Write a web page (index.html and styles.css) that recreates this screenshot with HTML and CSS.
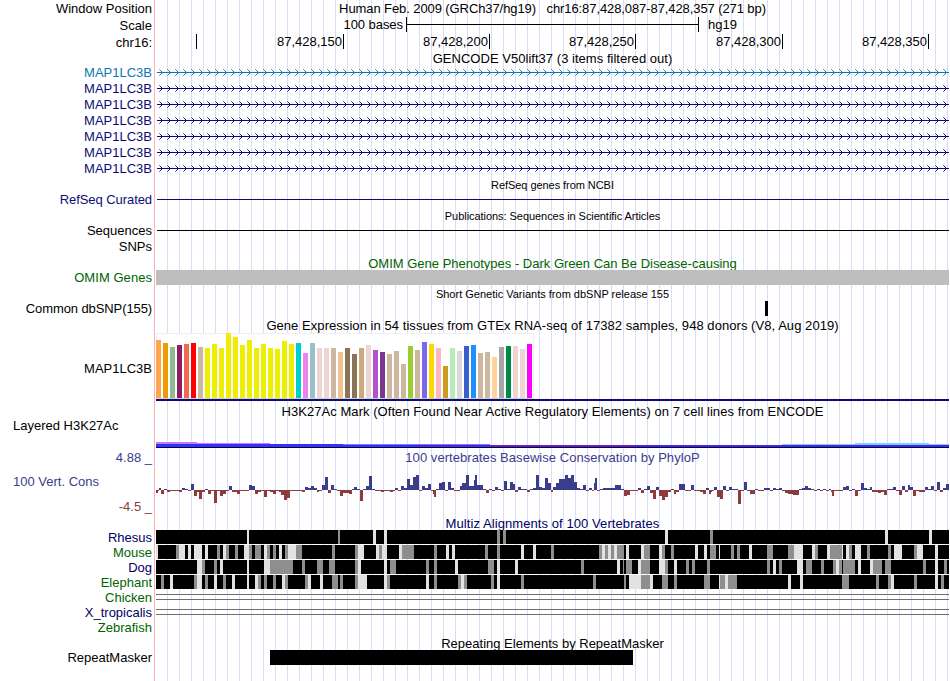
FILE: index.html
```html
<!DOCTYPE html>
<html lang="en">
<head>
    <meta charset="UTF-8">
    <title>Human chr16:87,428,087-87,428,357</title>
    <link rel="stylesheet" href="styles.css">
</head>
<body>
    <div class="browser">
        <div class="row h17">
            <div class="label">Window Position</div>
            <div class="title position">Human Feb. 2009 (GRCh37/hg19) &nbsp; chr16:87,428,087-87,428,357 (271 bp)</div>
        </div>
        <div class="row h17">
            <div class="label">Scale</div>
            <div class="plot scale">
                <span class="scale-size">100 bases</span>
                <span class="scale-bar"></span>
                <span class="scale-db">hg19</span>
            </div>
        </div>
        <div class="row h17">
            <div class="label">chr16:</div>
            <div class="plot ruler">
                <span class="tick first"></span>
                <span class="tick wide">87,428,150</span>
                <span class="tick">87,428,200</span>
                <span class="tick">87,428,250</span>
                <span class="tick wide">87,428,300</span>
                <span class="tick">87,428,350</span>
            </div>
        </div>

        <div class="row h13"><div class="title t-gencode">GENCODE V50lift37 (3 items filtered out)</div></div>
        <div class="row h16 lightblue"><div class="label">MAP1LC3B</div><svg class="plot gene"></svg></div>
        <div class="row h16 navy"><div class="label">MAP1LC3B</div><svg class="plot gene"></svg></div>
        <div class="row h16 navy"><div class="label">MAP1LC3B</div><svg class="plot gene"></svg></div>
        <div class="row h16 navy"><div class="label">MAP1LC3B</div><svg class="plot gene"></svg></div>
        <div class="row h16 navy"><div class="label">MAP1LC3B</div><svg class="plot gene"></svg></div>
        <div class="row h16 navy"><div class="label">MAP1LC3B</div><svg class="plot gene"></svg></div>
        <div class="row h16 navy"><div class="label">MAP1LC3B</div><svg class="plot gene"></svg></div>

        <div class="row h16"><div class="title small t-refseq">RefSeq genes from NCBI</div></div>
        <div class="row h16 navy"><div class="label raised t-curated">RefSeq Curated</div><div class="plot line"></div></div>

        <div class="row h15"><div class="title small t-pubs">Publications: Sequences in Scientific Articles</div></div>
        <div class="row h16"><div class="label raised">Sequences</div><div class="plot line"></div></div>
        <div class="row h16"><div class="label raised">SNPs</div></div>

        <div class="row h15 green"><div class="title t-omim">OMIM Gene Phenotypes - Dark Green Can Be Disease-causing</div></div>
        <div class="row h15 green"><div class="label t-genes">OMIM Genes</div><div class="plot omim"></div></div>

        <div class="row h16"><div class="title small t-dbsnp">Short Genetic Variants from dbSNP release 155</div></div>
        <div class="row h15"><div class="label t-common">Common dbSNP(155)</div><div class="plot"><div class="snp"></div></div></div>

        <div class="row h17"><div class="title t-gtex">Gene Expression in 54 tissues from GTEx RNA-seq of 17382 samples, 948 donors (V8, Aug 2019)</div></div>
        <div class="row h68"><div class="label lowered">MAP1LC3B</div><svg class="plot" id="gtex"></svg></div>

        <div class="row h19"><div class="title t-h3k">H3K27Ac Mark (Often Found Near Active Regulatory Elements) on 7 cell lines from ENCODE</div></div>
        <div class="row h28"><div class="label left h3k-label">Layered H3K27Ac</div><svg class="plot" id="h3k27ac"></svg></div>

        <div class="row h18 blue">
            <div class="label">4.88 _</div>
            <div class="title t-phylop">100 vertebrates Basewise Conservation by PhyloP</div>
        </div>
        <div class="row h49">
            <div class="label cons-label">
                <span class="blue cons-name">100 Vert. Cons</span>
                <span class="brown">-4.5 _</span>
            </div>
            <svg class="plot" id="phylop"></svg>
        </div>

        <div class="row h15 darkblue"><div class="title t-multiz">Multiz Alignments of 100 Vertebrates</div></div>
        <div class="row h15 darkblue"><div class="label">Rhesus</div><svg class="plot align" data-species="rhesus"></svg></div>
        <div class="row h15 green"><div class="label">Mouse</div><svg class="plot align" data-species="mouse"></svg></div>
        <div class="row h15 darkblue"><div class="label">Dog</div><svg class="plot align" data-species="dog"></svg></div>
        <div class="row h15 green"><div class="label">Elephant</div><svg class="plot align" data-species="elephant"></svg></div>
        <div class="row h15 green"><div class="label">Chicken</div><div class="plot"><div class="gap"></div></div></div>
        <div class="row h15 darkblue"><div class="label">X_tropicalis</div><div class="plot"><div class="gap"></div></div></div>
        <div class="row h15 green"><div class="label">Zebrafish</div></div>

        <div class="row h15"><div class="title t-rmsk">Repeating Elements by RepeatMasker</div></div>
        <div class="row h15"><div class="label">RepeatMasker</div><div class="plot"><div class="repeat"></div></div></div>
    </div>
    <script src="script.js"></script>
</body>
</html>
```
FILE: styles.css
```css
body {
    margin: 0;
    background: #fff;
    color: #000;
    font-family: "Liberation Sans", Arial, sans-serif;
    font-size: 13px;
}
.browser {
    width: 949px;
    height: 681px;
    overflow: hidden;
    background-image:
        linear-gradient(#ffb4b4, #ffb4b4),
        repeating-linear-gradient(to right, transparent 0, transparent 11px, #dcdcf8 11px, #dcdcf8 12px);
    background-size: 1px 100%, 793px 100%;
    background-position: 154px 0, 156px 0;
    background-repeat: no-repeat;
}
.row {
    display: flex;
    align-items: center;
    white-space: nowrap;
}
.h13 { height: 13px; }
.h15 { height: 15px; }
.h16 { height: 16px; }
.h17 { height: 17px; }
.h18 { height: 18px; }
.h19 { height: 19px; }
.h28 { height: 28px; }
.h49 { height: 49px; }
.h68 { height: 68px; }

.label {
    flex: none;
    width: 152px;
    margin-right: 4px;
    line-height: 15px;
    text-align: right;
}
.label.left {
    width: 139px;
    padding-left: 13px;
    text-align: left;
}
.label.raised { margin-bottom: 2px; }
.label.lowered { margin-top: 2px; }
.plot {
    flex: none;
    display: block;
    width: 793px;
    height: 100%;
    shape-rendering: crispEdges;
}
.title {
    flex: none;
    width: 793px;
    line-height: 15px;
    text-align: center;
}
.title:first-child {
    margin-left: 156px;
    margin-top: 2px;
}
.small { font-size: 11px; }

.position { letter-spacing: -0.09px; }
.t-gencode { letter-spacing: 0.03px; }
.t-refseq { letter-spacing: -0.06px; }
.t-curated { letter-spacing: -0.07px; }
.t-pubs { letter-spacing: -0.05px; }
.t-genes { letter-spacing: 0.05px; }
.t-common { letter-spacing: -0.1px; }
.t-gtex { letter-spacing: 0.055px; }
.t-h3k { letter-spacing: 0.05px; }
.t-phylop { letter-spacing: 0.05px; }
.t-multiz { letter-spacing: 0.08px; }

.lightblue { color: #0c78b4; }
.navy { color: #0c0c78; }
.darkblue { color: #000064; }
.blue { color: #3c3c8c; }
.brown { color: #8c3c3c; }
.green { color: #006400; }

/* scale and ruler */
.scale, .ruler {
    display: flex;
}
.scale {
    line-height: 15px;
}
.scale-size {
    width: 247px;
    padding-right: 3px;
    letter-spacing: -0.05px;
    text-align: right;
}
.scale-bar {
    box-sizing: border-box;
    width: 293px;
    height: 15px;
    border: solid #000;
    border-width: 0 1px;
    background: linear-gradient(#000, #000) 0 7px / 100% 1px no-repeat;
}
.scale-db {
    padding-left: 9px;
}
.tick {
    box-sizing: border-box;
    width: 146px;
    height: 15px;
    border-right: 1px solid #000;
    padding-right: 1px;
    line-height: 16px;
    text-align: right;
}
.tick.wide { width: 147px; }
.tick.first { width: 41px; }

/* items */
.line {
    box-sizing: border-box;
    background: linear-gradient(currentColor, currentColor) 1px 7px / 100% 1px no-repeat;
}
.omim {
    background: #bebebe;
}
.snp {
    width: 3px;
    height: 15px;
    margin-left: 609px;
    background: #000;
}
.gap {
    height: 4px;
    margin-top: 4px;
    border: solid #6e6e6e;
    border-width: 1px 0;
}
.repeat {
    width: 363px;
    height: 15px;
    margin-left: 114px;
    background: #000;
}
.h3k-label {
    align-self: flex-start;
    margin-top: -2px;
}
.cons-label {
    display: flex;
    flex-direction: column;
    height: 100%;
}
.cons-name {
    padding: 8px 0 10px 13px;
    text-align: left;
}
```
FILE: script.js
```js
// All x values are pixels in the full image; plots start at x = 156.
const LEFT = 156;
const RIGHT = 949;
const NS = 'http://www.w3.org/2000/svg';

function rect(svg, x, y, w, h, fill, opacity) {
    const r = document.createElementNS(NS, 'rect');
    r.setAttribute('x', x - LEFT);
    r.setAttribute('y', y);
    r.setAttribute('width', w);
    r.setAttribute('height', h);
    r.setAttribute('fill', fill);
    if (opacity) r.setAttribute('opacity', opacity);
    svg.appendChild(r);
}

// introns with strand arrows
document.querySelectorAll('.gene').forEach(svg => {
    rect(svg, 157, 8, RIGHT - 157, 1, 'currentColor');
    for (let x = 162; x < RIGHT + 2; x += 8) {
        rect(svg, x - 1, 7, 1, 3, 'currentColor');
        rect(svg, x - 2, 6, 1, 1, 'currentColor', 0.9);
        rect(svg, x - 2, 10, 1, 1, 'currentColor', 0.9);
        rect(svg, x - 3, 5, 1, 1, 'currentColor', 0.55);
        rect(svg, x - 3, 11, 1, 1, 'currentColor', 0.55);
    }
});

// GTEx expression: [color, height]
const tissues = [
    ['#ffa54f', 58], ['#ee9a00', 55], ['#8fbc8f', 51], ['#8b1c62', 53], ['#ee6a50', 54], ['#ff0000', 55],
    ['#cdb79e', 51], ['#eeee00', 50], ['#eeee00', 54], ['#eeee00', 50], ['#eeee00', 65], ['#eeee00', 61],
    ['#eeee00', 53], ['#eeee00', 58], ['#eeee00', 50], ['#eeee00', 54], ['#eeee00', 50], ['#eeee00', 49],
    ['#eeee00', 57], ['#eeee00', 54], ['#00cdcd', 55], ['#ee82ee', 45], ['#9ac0cd', 55], ['#eed5d2', 50],
    ['#eed5d2', 50], ['#cdb79e', 50], ['#eec591', 46], ['#8b7355', 50], ['#8b7355', 44], ['#cdaa7d', 50],
    ['#eed5d2', 53], ['#b452cd', 48], ['#7a378b', 46], ['#cdb79e', 44], ['#cdb79e', 47], ['#cdb79e', 34],
    ['#9acd32', 52], ['#cdb79e', 48], ['#7a67ee', 56], ['#ffd700', 54], ['#ffb6c1', 50], ['#cd9b1d', 32],
    ['#b4eeb4', 50], ['#d9d9d9', 47], ['#3a5fcd', 52], ['#1e90ff', 53], ['#cdb79e', 45], ['#cdb79e', 46],
    ['#ffd39b', 41], ['#a6a6a6', 51], ['#008b45', 52], ['#eed5d2', 52], ['#eed5d2', 49], ['#ff00ff', 54]
];
const gtex = document.getElementById('gtex');
rect(gtex, 156, 0, 378, 66, '#f0f0f0');
rect(gtex, 157, 1, 376, 64, '#fff');
rect(gtex, 156, 65, 378, 1, '#d2d2d2');
tissues.forEach(([color, h], i) => rect(gtex, LEFT + i * 7, 65 - h, 5, h, color));
rect(gtex, 156, 66, 793, 2, '#0c0c78');

// layered H3K27Ac signal
const h3k = document.getElementById('h3k27ac');
rect(h3k, 156, 22, 41, 2, '#c878ff');
rect(h3k, 197, 23, 73, 1, '#c878ff');
rect(h3k, 156, 24, 260, 3, '#3232ff');
rect(h3k, 343, 24, 147, 1, '#7878ff');
rect(h3k, 416, 25, 74, 2, '#4628e6');
rect(h3k, 490, 25, 145, 2, '#6420c8');
rect(h3k, 635, 25, 314, 2, '#3c28f0');
rect(h3k, 782, 24, 167, 1, '#78d2ff');
rect(h3k, 855, 23, 74, 2, '#78d2ff');
rect(h3k, 156, 27, 793, 1, '#0a0032');

// PhyloP scores: x:height, each run lasts until the next x
const scores = `
156:-3 158:-1 159:2 161:-4 164:1 167:-2 170:-1 179:-2 182:2 185:1 188:-1 191:6 194:-6 197:-2 199:-9 202:-2
205:1 208:-4 211:-1 214:-13 217:-1 220:-6 223:-4 226:-1 229:4 232:-2 237:-4 240:-1 249:5 252:4 255:-4 258:-2
261:-1 264:-7 267:-1 270:-2 273:-4 276:-1 279:-2 281:-5 284:-10 287:-8 290:-1 302:-2 305:3 308:2 311:4 314:2
317:-2 319:-1 322:5 325:13 328:-3 331:5 334:1 337:-1 340:-6 343:-3 349:-4 352:1 354:3 357:1 360:-11 363:1
366:4 369:14 372:1 375:-1 381:-2 384:-1 390:-2 393:-1 395:2 398:-1 401:4 404:2 407:11 410:5 413:13 416:15
419:-1 422:4 425:2 428:6 431:-1 433:-4 434:-7 436:1 439:7 442:8 445:-1 448:8 451:2 454:-1 460:4 462:7 466:15
469:4 474:10 475:15 477:5 483:1 486:-3 489:1 492:-1 495:3 498:1 501:-1 504:9 507:1 510:8 513:6 515:-2 518:3
521:1 527:-2 530:1 533:2 536:15 539:3 542:2 545:12 548:7 551:-2 553:3 556:7 559:11 565:15 568:12 571:15 574:8
577:2 580:1 583:5 586:-1 589:2 592:-1 594:7 595:12 597:-1 600:1 603:2 615:5 621:1 624:-6 627:-5 630:-1
638:2 641:-3 644:1 647:4 650:-3 653:-9 656:3 659:-6 662:-10 665:-7 668:-2 671:1 674:-4 676:-2 679:6 685:-1
691:5 694:-1 700:-2 703:-4 706:2 709:-4 711:-2 712:-1 714:3 717:-7 720:-9 723:4 726:-1 729:3 732:1 738:-14
741:-1 744:8 747:-1 750:-4 755:1 758:-1 764:2 770:-1 773:2 776:1 779:2 782:-1 785:-3 788:-4 793:-5 799:1
802:2 805:4 808:2 811:1 814:-1 817:1 820:-1 823:1 826:-1 829:1 831:-2 832:-6 834:-1 843:3 846:4 849:-1
852:1 855:-6 858:-1 861:7 864:2 867:1 870:3 872:-2 878:-3 881:-2 884:-5 887:1 893:3 896:-1 899:-5 902:4
905:-2 908:5 910:3 913:-6 916:-1 919:-2 925:3 928:1 931:4 934:-1 937:8 940:-2 943:2 946:6`;
const phylop = document.getElementById('phylop');
const runs = scores.trim().split(/\s+/).map(s => s.split(':').map(Number));
runs.forEach(([x, v], i) => {
    const end = i + 1 < runs.length ? runs[i + 1][0] : RIGHT;
    if (v > 0) rect(phylop, x, 24 - v, end - x, v, '#3c3c8c');
    else rect(phylop, x, 24, end - x, -v, '#8c3c3c');
});

// alignment quality: g = gray, l = light, everything else is black
const alignments = {
    rhesus: 'l247-249 g338-340 l373-376 l384-387 g497-500 g503-506 l665-668 g710-713 l885-888 l929-932',
    mouse: `l156-158 g176-179 l179-185 l188-191 l194-202 l205-208 g217-220 l223-226 g226-229 g235-238 l244-249
        g249-252 g255-261 l264-267 g267-270 g273-276 l279-282 g285-288 l288-296 g296-302 g332-335 g355-358
        l358-364 l376-379 g379-382 l382-387 l399-402 g402-414 g434-437 l446-449 l452-455 g485-488 g497-500
        l521-524 l533-536 g551-554 g599-602 l602-605 g605-608 l608-611 g611-614 l614-617 g617-624 l626-629
        l641-644 g644-650 l659-662 g662-665 g671-674 l695-698 l704-707 g710-716 l719-720 g731-734 g737-740
        l749-752 g767-773 g788-794 l794-803 l812-815 g815-818 l827-830 g830-842 l842-843 l846-849 g849-852
        l855-861 g867-870 g888-891 l894-902 g914-917 l917-923 l935-938`,
    dog: `l197-202 g202-205 g214-217 l220-223 l247-249 l264-270 g270-293 g302-305 g317-323 g329-335 g355-358
        l358-361 l384-387 g390-396 g426-429 g434-437 l455-458 g488-494 l497-500 l515-518 g581-584 l617-620
        g623-624 g626-632 l638-641 g641-650 l659-665 g665-668 l674-677 g686-689 g692-695 g707-710 g767-770
        l773-776 g779-782 l797-803 g806-812 g821-824 g833-836 l836-839 g839-842 g843-855 l858-861 l870-873
        g873-882 g885-891 g923-926 l935-938 g944-947`,
    elephant: `g161-164 l170-173 g194-197 l197-202 g205-208 l214-217 g223-226 l232-235 l247-249 l255-258
        g258-261 g264-267 g273-276 l282-285 g285-288 g305-308 l308-311 l320-323 g332-338 g340-343 g355-358
        l358-367 l384-387 g387-390 l426-429 g434-437 g458-461 l461-464 g464-467 g491-494 l497-500 g521-524
        g593-596 g624-626 l629-641 g641-650 l650-653 g662-668 g674-677 g704-710 l719-720 g720-725 l725-728
        g728-737 l788-791 l800-803 g842-849 g876-879 g888-891 l891-894 g914-917 l935-938 g941-944`
};
document.querySelectorAll('.align').forEach(svg => {
    rect(svg, LEFT, 0, RIGHT - LEFT, 14, '#000');
    alignments[svg.dataset.species].split(/\s+/).forEach(cell => {
        const [start, end] = cell.slice(1).split('-').map(Number);
        rect(svg, start, 0, end - start, 14, cell[0] === 'g' ? '#8e8e8e' : '#e2e2e2');
    });
});
```
